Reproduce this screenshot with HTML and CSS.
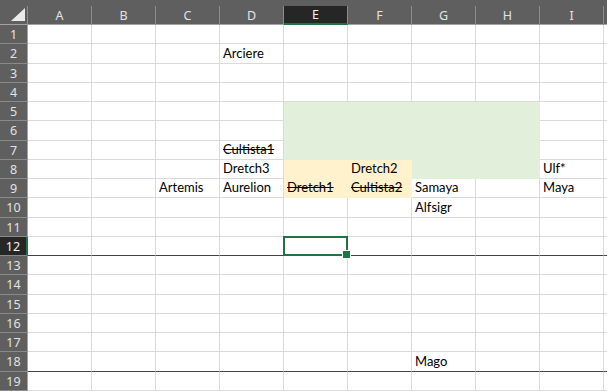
FILE: index.html
```html
<!DOCTYPE html>
<html lang="it">

<head>
    <meta charset="UTF-8">
    <title>Foglio1</title>
    <link rel="stylesheet" href="styles.css">
</head>

<body>
    <div class="top_strip"></div>
    <div class="sheet" id="sheet"></div>

    <script>
        // contenuto delle celle
        var values = {
            D2: "Arciere",
            D7: "Cultista1",
            C9: "Artemis",
            D8: "Dretch3",
            D9: "Aurelion",
            E9: "Dretch1",
            F8: "Dretch2",
            F9: "Cultista2",
            G9: "Samaya",
            G10: "Alfsigr",
            I8: "Ulf*",
            I9: "Maya",
            G18: "Mago"
        };
        var struck = ["D7", "E9", "F9"];
        var cols = "ABCDEFGHIJ";

        function inRange(c, r, c1, r1, c2, r2) {
            var i = cols.indexOf(c);
            return i >= cols.indexOf(c1) && i <= cols.indexOf(c2) && r >= r1 && r <= r2;
        }

        function fillOf(c, r) {
            if (inRange(c, r, "E", 8, "F", 9)) return "yellow";
            if (inRange(c, r, "E", 5, "H", 7) || inRange(c, r, "G", 8, "H", 8)) return "green";
            return "";
        }

        var html = '<div class="corner"></div>';
        for (var i = 0; i < cols.length; i++) {
            // la colonna J resta fuori dalla finestra
            var label = cols[i] == "J" ? "" : cols[i];
            html += '<div class="col_head' + (cols[i] == "E" ? " on" : "") + '">' + label + '</div>';
        }
        for (var r = 1; r <= 19; r++) {
            html += '<div class="row_head' + (r == 12 ? " on" : "") + '">' + r + '</div>';
            for (var i = 0; i < cols.length; i++) {
                var ref = cols[i] + r;
                var cls = "cell " + fillOf(cols[i], r);
                if (struck.indexOf(ref) >= 0) cls += " strike";
                if (r == 12 || r == 18) cls += " brk";
                if (ref == "E12") cls += " sel";
                html += '<div class="' + cls + '">' + (values[ref] || "") + '</div>';
            }
        }
        document.getElementById("sheet").innerHTML = html;
    </script>
</body>

</html>
```

FILE: styles.css
```css
* {
    margin: 0;
    padding: 0;
    box-sizing: border-box;
}

body {
    font-family: Lato, "Liberation Sans", sans-serif;
    background: #fff;
    overflow: hidden;
}

.top_strip {
    height: 6px;
    background: #5f5f5f;
}

.sheet {
    display: grid;
    grid-template-columns: 28px repeat(10, 64px);
    grid-template-rows: 19px repeat(19, 19.25px);
    width: 607px;
    overflow: hidden;
}

.corner {
    position: relative;
    background: #5f5f5f;
    border-right: 1px solid #8c8c8c;
    border-bottom: 1px solid #a3a3a3;
}

.corner::after {
    content: "";
    position: absolute;
    right: 2px;
    bottom: 3px;
    width: 14px;
    height: 13px;
    background: #ececec;
    clip-path: polygon(100% 0, 100% 100%, 0 100%);
}

.col_head,
.row_head {
    display: flex;
    align-items: center;
    justify-content: center;
    background: #5f5f5f;
    color: #e2e2e2;
    font-family: "Noto Sans", sans-serif;
    font-size: 12.5px;
}

.col_head {
    border-right: 1px solid #8c8c8c;
    border-bottom: 1px solid #a3a3a3;
}

.col_head.on {
    background: #262626;
    border-bottom: 2px solid #217346;
    color: #f2f2f2;
}

.row_head {
    border-right: 1px solid #a3a3a3;
    border-bottom: 1px solid #8a8a8a;
    padding-top: 1px;
}

.row_head.on {
    background: #262626;
    border-right: 2px solid #217346;
    color: #f2f2f2;
}

.cell {
    display: flex;
    align-items: flex-end;
    padding: 0 0 1px 3px;
    border-right: 1px solid #dadada;
    border-bottom: 1px solid #dadada;
    font-size: 13px;
    line-height: 17px;
    color: #000;
    white-space: nowrap;
}

.cell.green {
    background: #e2efda;
    border-color: #e2efda;
}

.cell.yellow {
    background: #fff2cc;
    border-color: #fff2cc;
}

.cell.strike {
    text-decoration: line-through;
}

.cell.brk {
    border-bottom-color: #444;
}

.cell.sel {
    position: relative;
}

.cell.sel::before {
    content: "";
    position: absolute;
    left: -1px;
    top: -1px;
    right: -1px;
    bottom: -1px;
    border: 2px solid #217346;
}

.cell.sel::after {
    content: "";
    position: absolute;
    right: -4px;
    bottom: -4px;
    width: 7px;
    height: 7px;
    background: #217346;
    border: 1px solid #fff;
}
```
